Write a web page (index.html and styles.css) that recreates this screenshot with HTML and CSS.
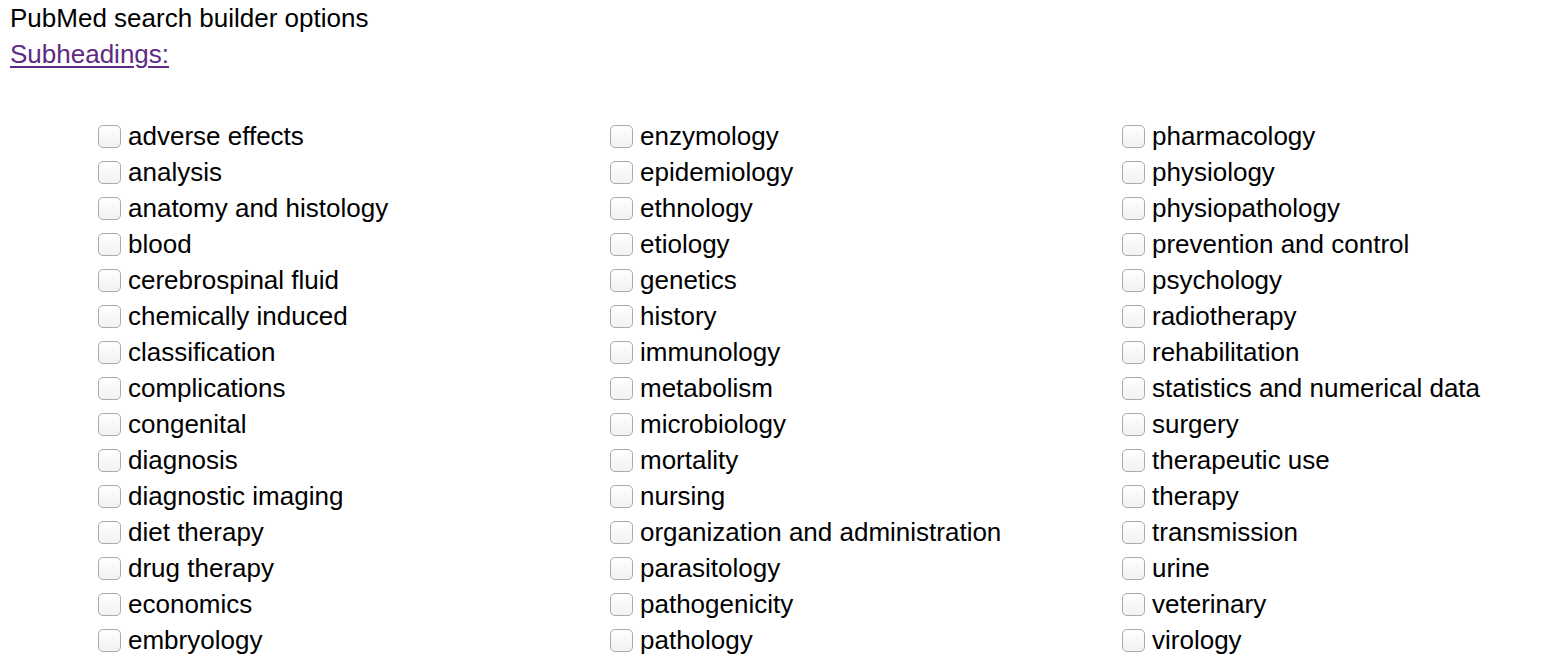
FILE: index.html
```html
<!DOCTYPE html>
<html>
<head>
<meta charset="utf-8">
<title>PubMed search builder options</title>
<link rel="stylesheet" href="styles.css">
</head>
<body>
<div class="title">PubMed search builder options</div>
<div class="sub"><a href="#" class="sublink">Subheadings:</a></div>
<div class="grid">
  <div class="col">
    <label class="item"><input type="checkbox" class="cb"><span>adverse effects</span></label>
    <label class="item"><input type="checkbox" class="cb"><span>analysis</span></label>
    <label class="item"><input type="checkbox" class="cb"><span>anatomy and histology</span></label>
    <label class="item"><input type="checkbox" class="cb"><span>blood</span></label>
    <label class="item"><input type="checkbox" class="cb"><span>cerebrospinal fluid</span></label>
    <label class="item"><input type="checkbox" class="cb"><span>chemically induced</span></label>
    <label class="item"><input type="checkbox" class="cb"><span>classification</span></label>
    <label class="item"><input type="checkbox" class="cb"><span>complications</span></label>
    <label class="item"><input type="checkbox" class="cb"><span>congenital</span></label>
    <label class="item"><input type="checkbox" class="cb"><span>diagnosis</span></label>
    <label class="item"><input type="checkbox" class="cb"><span>diagnostic imaging</span></label>
    <label class="item"><input type="checkbox" class="cb"><span>diet therapy</span></label>
    <label class="item"><input type="checkbox" class="cb"><span>drug therapy</span></label>
    <label class="item"><input type="checkbox" class="cb"><span>economics</span></label>
    <label class="item"><input type="checkbox" class="cb"><span>embryology</span></label>
  </div>
  <div class="col">
    <label class="item"><input type="checkbox" class="cb"><span>enzymology</span></label>
    <label class="item"><input type="checkbox" class="cb"><span>epidemiology</span></label>
    <label class="item"><input type="checkbox" class="cb"><span>ethnology</span></label>
    <label class="item"><input type="checkbox" class="cb"><span>etiology</span></label>
    <label class="item"><input type="checkbox" class="cb"><span>genetics</span></label>
    <label class="item"><input type="checkbox" class="cb"><span>history</span></label>
    <label class="item"><input type="checkbox" class="cb"><span>immunology</span></label>
    <label class="item"><input type="checkbox" class="cb"><span>metabolism</span></label>
    <label class="item"><input type="checkbox" class="cb"><span>microbiology</span></label>
    <label class="item"><input type="checkbox" class="cb"><span>mortality</span></label>
    <label class="item"><input type="checkbox" class="cb"><span>nursing</span></label>
    <label class="item"><input type="checkbox" class="cb"><span>organization and administration</span></label>
    <label class="item"><input type="checkbox" class="cb"><span>parasitology</span></label>
    <label class="item"><input type="checkbox" class="cb"><span>pathogenicity</span></label>
    <label class="item"><input type="checkbox" class="cb"><span>pathology</span></label>
  </div>
  <div class="col">
    <label class="item"><input type="checkbox" class="cb"><span>pharmacology</span></label>
    <label class="item"><input type="checkbox" class="cb"><span>physiology</span></label>
    <label class="item"><input type="checkbox" class="cb"><span>physiopathology</span></label>
    <label class="item"><input type="checkbox" class="cb"><span>prevention and control</span></label>
    <label class="item"><input type="checkbox" class="cb"><span>psychology</span></label>
    <label class="item"><input type="checkbox" class="cb"><span>radiotherapy</span></label>
    <label class="item"><input type="checkbox" class="cb"><span>rehabilitation</span></label>
    <label class="item"><input type="checkbox" class="cb"><span>statistics and numerical data</span></label>
    <label class="item"><input type="checkbox" class="cb"><span>surgery</span></label>
    <label class="item"><input type="checkbox" class="cb"><span>therapeutic use</span></label>
    <label class="item"><input type="checkbox" class="cb"><span>therapy</span></label>
    <label class="item"><input type="checkbox" class="cb"><span>transmission</span></label>
    <label class="item"><input type="checkbox" class="cb"><span>urine</span></label>
    <label class="item"><input type="checkbox" class="cb"><span>veterinary</span></label>
    <label class="item"><input type="checkbox" class="cb"><span>virology</span></label>
  </div>
</div>
</body>
</html>
```
FILE: styles.css
```css
html, body {
  margin: 0;
  padding: 0;
  background: #ffffff;
}
body {
  font-family: "Liberation Sans", Arial, sans-serif;
  font-size: 26px;
  line-height: 36px;
  color: #000000;
  padding-left: 10px;
}
.title {
  height: 36px;
}
.sub {
  height: 36px;
}
.sublink {
  color: #5e2a84;
  text-decoration: underline;
  text-decoration-thickness: 2px;
  text-underline-offset: 3px;
}
.grid {
  display: grid;
  grid-template-columns: 512px 512px 420px;
  margin-top: 46px;
  padding-left: 88px;
}
.col {
  display: flex;
  flex-direction: column;
}
.item {
  display: flex;
  align-items: center;
  height: 36px;
  white-space: nowrap;
}
.cb {
  appearance: none;
  -webkit-appearance: none;
  width: 23px;
  height: 23px;
  margin: 0 7px 0 0;
  border: 1px solid #aaaaaa;
  border-radius: 5px;
  background: linear-gradient(#ffffff, #f2f2f2);
  box-sizing: border-box;
  flex: none;
}
```
